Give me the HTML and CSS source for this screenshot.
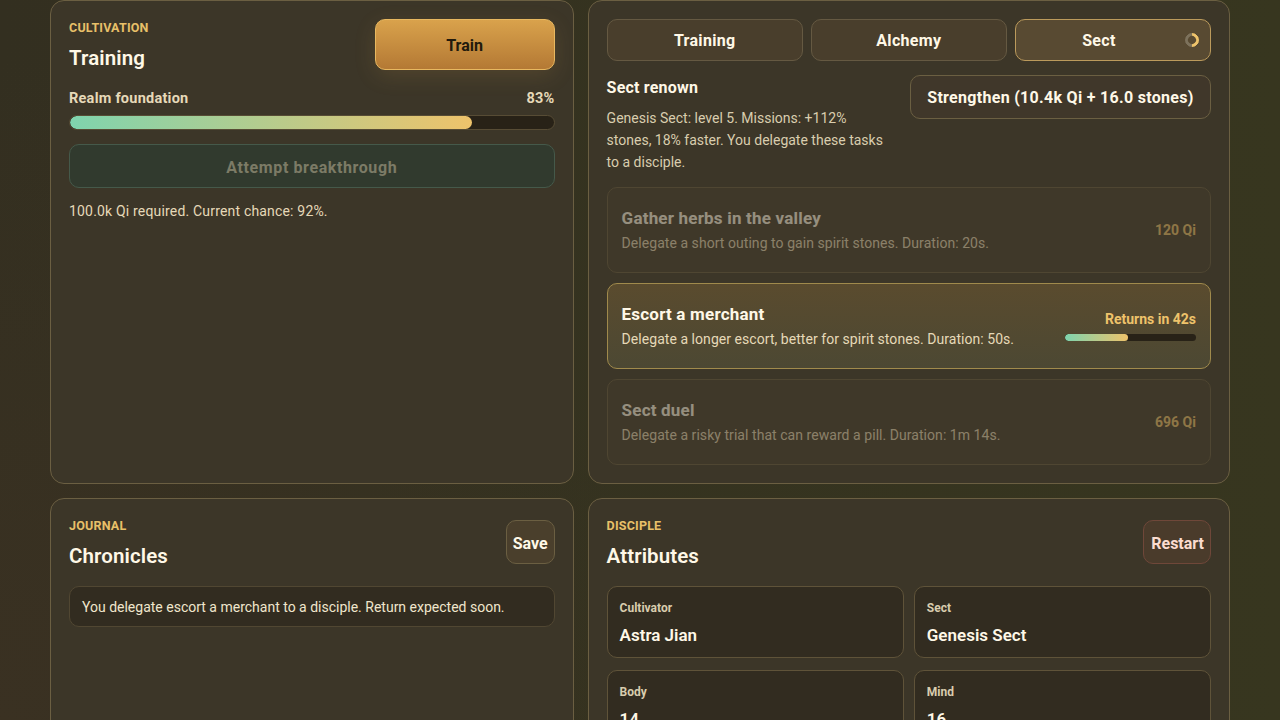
FILE: index.html
```html
<!DOCTYPE html>
<html>
<head>
  <title>Cultivation</title>
  <link rel="stylesheet" href="styles.css">
</head>
<body>
  <div class="layout">
    <section class="panel">
      <div class="panel-head">
        <div>
          <div class="eyebrow">Cultivation</div>
          <h2>Training</h2>
        </div>
        <button class="btn btn-train">Train</button>
      </div>
      <div class="progress-label">
        <span>Realm foundation</span>
        <span>83%</span>
      </div>
      <div class="bar"><div class="bar-fill" style="width: 83.2%"></div></div>
      <button class="btn btn-breakthrough">Attempt breakthrough</button>
      <p class="note">100.0k Qi required. Current chance: 92%.</p>
    </section>

    <section class="panel">
      <div class="tabs">
        <button class="btn tab">Training</button>
        <button class="btn tab">Alchemy</button>
        <button class="btn tab tab-active">Sect<span class="spinner"></span></button>
      </div>
      <div class="renown">
        <div class="renown-text">
          <h3>Sect renown</h3>
          <p>Genesis Sect: level 5. Missions: +112% stones, 18% faster. You delegate these tasks to a disciple.</p>
        </div>
        <button class="btn btn-strengthen">Strengthen (10.4k Qi + 16.0 stones)</button>
      </div>
      <div class="missions">
        <div class="mission mission-disabled">
          <div>
            <div class="mission-title">Gather herbs in the valley</div>
            <div class="mission-desc">Delegate a short outing to gain spirit stones. Duration: 20s.</div>
          </div>
          <div class="mission-side">120 Qi</div>
        </div>
        <div class="mission mission-active">
          <div>
            <div class="mission-title">Escort a merchant</div>
            <div class="mission-desc">Delegate a longer escort, better for spirit stones. Duration: 50s.</div>
          </div>
          <div class="mission-side">
            Returns in 42s
            <div class="bar bar-small"><div class="bar-fill" style="width: 48%"></div></div>
          </div>
        </div>
        <div class="mission mission-disabled">
          <div>
            <div class="mission-title">Sect duel</div>
            <div class="mission-desc">Delegate a risky trial that can reward a pill. Duration: 1m 14s.</div>
          </div>
          <div class="mission-side">696 Qi</div>
        </div>
      </div>
    </section>

    <section class="panel">
      <div class="panel-head panel-head-low">
        <div>
          <div class="eyebrow">Journal</div>
          <h2>Chronicles</h2>
        </div>
        <button class="btn btn-small">Save</button>
      </div>
      <div class="log-item">You delegate escort a merchant to a disciple. Return expected soon.</div>
    </section>

    <section class="panel">
      <div class="panel-head panel-head-low">
        <div>
          <div class="eyebrow">Disciple</div>
          <h2>Attributes</h2>
        </div>
        <button class="btn btn-small btn-danger">Restart</button>
      </div>
      <div class="stats">
        <div class="stat">
          <div class="stat-label">Cultivator</div>
          <div class="stat-value">Astra Jian</div>
        </div>
        <div class="stat">
          <div class="stat-label">Sect</div>
          <div class="stat-value">Genesis Sect</div>
        </div>
        <div class="stat">
          <div class="stat-label">Body</div>
          <div class="stat-value">14</div>
        </div>
        <div class="stat">
          <div class="stat-label">Mind</div>
          <div class="stat-value">16</div>
        </div>
      </div>
    </section>
  </div>
</body>
</html>
```
FILE: styles.css
```css
* {
  box-sizing: border-box;
}

html,
body {
  height: 100%;
  overflow: hidden;
}

body {
  margin: 0;
  font-family: Roboto, Arial, sans-serif;
  color: #f5ecd6;
  background: radial-gradient(circle at 0 100%, #3a3122 0%, rgba(58, 49, 34, 0) 45%),
    linear-gradient(90deg, #332f20 0%, #37361f 100%);
}

.layout {
  display: grid;
  grid-template-columns: 523.6px 642.4px;
  grid-template-rows: 484px auto;
  gap: 14px;
  width: 1180px;
  margin: 0 auto;
}

.panel {
  background: #3c3628;
  border: 1px solid #6b5f42;
  border-radius: 14px;
  padding: 18px;
}

.panel-head {
  display: flex;
  justify-content: space-between;
  align-items: flex-start;
  margin-bottom: 17px;
}

.panel-head-low {
  margin-bottom: 16px;
}

.eyebrow {
  margin-top: 1px;
  font-size: 12.5px;
  line-height: 16px;
  font-weight: 700;
  letter-spacing: 0.2px;
  text-transform: uppercase;
  color: #e8c069;
}

h2 {
  margin: 8px 0 0;
  font-size: 20.5px;
  line-height: 28px;
  font-weight: 600;
  letter-spacing: 0.1px;
  color: #fff8e7;
}

h3 {
  margin: 0;
  font-size: 16px;
  line-height: 22px;
  font-weight: 700;
  letter-spacing: 0.2px;
  color: #fff8e7;
}

.btn {
  display: block;
  padding-top: 2px;
  font-family: inherit;
  font-size: 16px;
  font-weight: 700;
  color: #fff8e7;
  background: #4a3f2c;
  border: 1px solid #6b5f42;
  border-radius: 10px;
  cursor: pointer;
}

.btn-train {
  width: 180px;
  height: 51px;
  color: #221a0c;
  background: linear-gradient(180deg, #d9a24c 0%, #b47934 100%);
  border-color: #e8b860;
  box-shadow: 0 6px 22px rgba(217, 162, 76, 0.14);
}

.progress-label {
  display: flex;
  justify-content: space-between;
  padding-top: 1px;
  font-size: 14.5px;
  line-height: 18px;
  font-weight: 700;
  letter-spacing: 0.25px;
  color: #e6d9b8;
}

.bar {
  height: 15px;
  margin-top: 7px;
  background: #282217;
  border: 1px solid #574c35;
  border-radius: 8px;
  overflow: hidden;
}

.bar-fill {
  height: 100%;
  border-radius: 8px;
  background: linear-gradient(90deg, #7fd4ae 0%, #eec36b 100%);
}

.bar-small {
  width: 131px;
  height: 7px;
  margin-top: 7px;
  border: 0;
}

.btn-breakthrough {
  width: 100%;
  height: 44px;
  margin-top: 14px;
  padding-top: 3px;
  letter-spacing: 0.6px;
  color: #7c7b66;
  background: #313a2e;
  border-color: #45594a;
}

.note {
  margin: 14px 0 0;
  font-size: 14px;
  line-height: 18px;
  letter-spacing: 0.18px;
  color: #e6d9b8;
}

.tabs {
  display: grid;
  grid-template-columns: repeat(3, 1fr);
  gap: 8px;
}

.tab {
  position: relative;
  height: 42px;
  padding-top: 1px;
  letter-spacing: 0.3px;
  background: #493e2c;
  border-color: #655942;
}

.tab-active {
  padding-right: 34px;
  background: #584a32;
  border-color: #bb9a5c;
}

.spinner {
  position: absolute;
  top: 13px;
  right: 11px;
  width: 14px;
  height: 14px;
  border: 3px solid #7d725c;
  border-top-color: #eec36b;
  border-right-color: #eec36b;
  border-radius: 50%;
  transform: rotate(45deg);
}

.renown {
  display: flex;
  justify-content: space-between;
  align-items: flex-start;
  margin-top: 14px;
}

.renown-text {
  width: 284px;
}

.renown-text h3 {
  padding-top: 2px;
  margin-bottom: 8px;
}

.renown-text p {
  margin: 0;
  font-size: 14px;
  line-height: 22px;
  color: #d9cdae;
}

.btn-strengthen {
  width: 301px;
  height: 44px;
  padding-top: 1px;
  letter-spacing: 0.3px;
  background: #40372a;
}

.missions {
  display: flex;
  flex-direction: column;
  gap: 10px;
  margin-top: 14px;
}

.mission {
  display: flex;
  justify-content: space-between;
  align-items: center;
  height: 86px;
  padding: 0 14px;
  background: #3f3829;
  border: 1px solid #4f4632;
  border-radius: 10px;
}

.mission-title {
  font-size: 17px;
  line-height: 22px;
  font-weight: 700;
  letter-spacing: 0.2px;
  color: #fff8e7;
}

.mission-desc {
  margin-top: 4px;
  font-size: 14px;
  line-height: 20px;
  letter-spacing: 0.05px;
  color: #e6d9b8;
}

.mission-side {
  font-size: 14px;
  font-weight: 700;
  text-align: right;
  color: #eec36b;
}

.mission-disabled .mission-title,
.mission-disabled .mission-desc,
.mission-disabled .mission-side {
  opacity: 0.45;
}

.mission-active {
  background: linear-gradient(180deg, #5a4b2e 0%, #4c4833 100%);
  border-color: #a08a4c;
}

.btn-small {
  height: 44px;
  padding: 2px 6px 0;
  margin-top: 3px;
}

.btn-danger {
  padding-left: 7px;
  color: #fbdcd0;
  background: #4a3b2b;
  border-color: #6f4739;
}

.log-item {
  height: 41px;
  padding: 0 12px;
  font-size: 14px;
  line-height: 41px;
  color: #f0e6cc;
  background: #322c20;
  border: 1px solid #514732;
  border-radius: 10px;
}

.stats {
  display: grid;
  grid-template-columns: 1fr 1fr;
  gap: 12px 10px;
}

.stat {
  height: 72px;
  padding: 13px 12px;
  background: #322c20;
  border: 1px solid #5f5339;
  border-radius: 10px;
}

.stat-label {
  font-size: 12px;
  line-height: 16px;
  font-weight: 700;
  color: #d9cdae;
}

.stat-value {
  margin-top: 7px;
  font-size: 17px;
  line-height: 24px;
  font-weight: 600;
  color: #fff8e7;
}
```
